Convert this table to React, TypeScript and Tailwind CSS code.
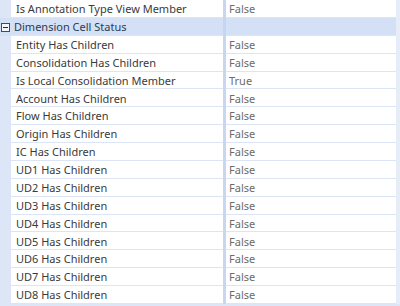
const rows: [string, string][] = [
  ["Entity Has Children", "False"],
  ["Consolidation Has Children", "False"],
  ["Is Local Consolidation Member", "True"],
  ["Account Has Children", "False"],
  ["Flow Has Children", "False"],
  ["Origin Has Children", "False"],
  ["IC Has Children", "False"],
  ["UD1 Has Children", "False"],
  ["UD2 Has Children", "False"],
  ["UD3 Has Children", "False"],
  ["UD4 Has Children", "False"],
  ["UD5 Has Children", "False"],
  ["UD6 Has Children", "False"],
  ["UD7 Has Children", "False"],
  ["UD8 Has Children", "False"],
];

function Row({ label, value }: { label: string; value: string }) {
  return (
    <div className="flex h-[17.875px] shrink-0">
      <div className="w-[11px] shrink-0" />
      <div className="flex w-[212px] shrink-0 items-center border-b border-[#dbe5f6] bg-white pl-[5px] pt-[2px] text-[#3a3a3a]">
        {label}
      </div>
      <div className="w-[3px] shrink-0 bg-[#c8d7ef]" />
      <div className="flex flex-1 items-center border-b border-[#dbe5f6] bg-white pl-[3px] pt-[2px] text-[#6b6b6b]">
        {value}
      </div>
      <div className="w-[4px] shrink-0 bg-[#e6edf9]" />
    </div>
  );
}

export default function App() {
  return (
    <div
      className="flex h-[306px] w-[400px] flex-col overflow-hidden bg-[#dde6f6] text-[11px]"
      style={{ fontFamily: '"Segoe UI", "Noto Sans", sans-serif' }}
    >
      <Row label="Is Annotation Type View Member" value="False" />
      <div className="flex h-[17.875px] shrink-0 items-stretch bg-[#d3e0f5]">
        <div className="flex w-[11px] shrink-0 items-center justify-center pt-[1px]">
          <svg width="9" height="9" viewBox="0 0 9 9">
            <rect x="0.5" y="0.5" width="8" height="8" fill="#f3f6fb" stroke="#4a4a4a" />
            <line x1="2" y1="4.5" x2="7" y2="4.5" stroke="#2a2a2a" />
          </svg>
        </div>
        <div className="flex w-[212px] shrink-0 items-center border-b border-[#dbe5f6] pl-[3px] pt-[2px] text-[#2f3b4f]">
          Dimension Cell Status
        </div>
        <div className="w-[3px] shrink-0 bg-[#c6d6ef]" />
        <div className="flex-1 border-b border-[#dbe5f6]" />
        <div className="w-[4px] shrink-0 bg-[#e6edf9]" />
      </div>
      {rows.map(([l, v]) => (
        <Row key={l} label={l} value={v} />
      ))}
    </div>
  );
}
